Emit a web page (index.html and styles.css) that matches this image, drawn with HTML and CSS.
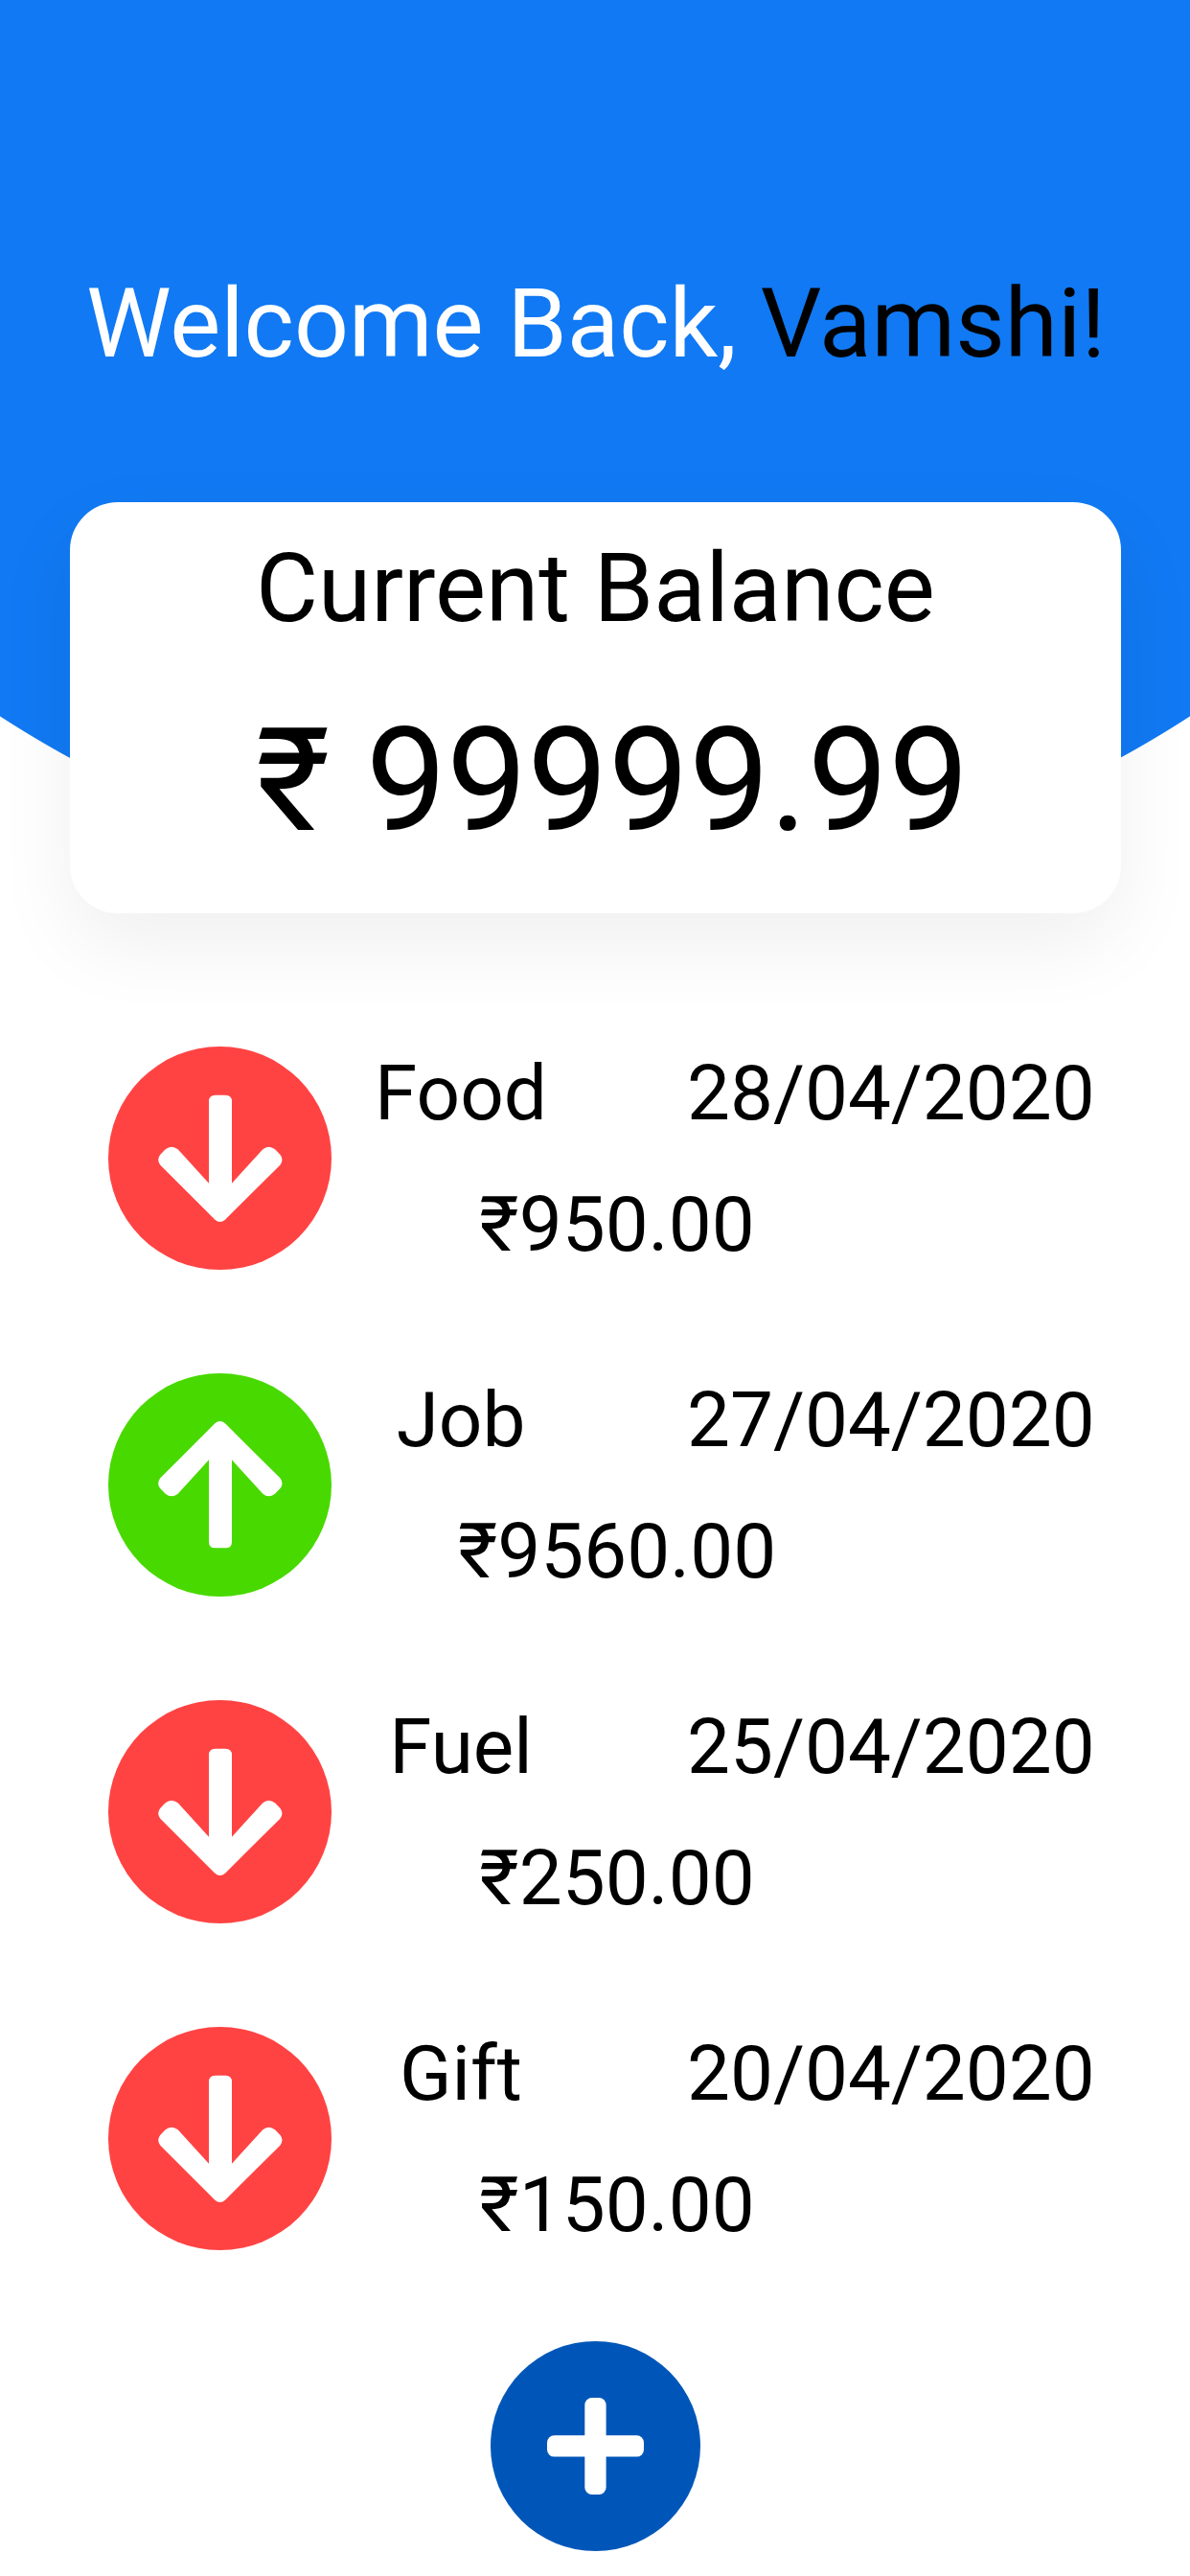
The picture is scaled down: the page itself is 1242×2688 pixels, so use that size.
FILE: index.html
```html
<!DOCTYPE html>
<html lang="en">
<head>
<meta charset="utf-8">
<title>Balance</title>
<link rel="stylesheet" href="styles.css">
</head>
<body>
<svg width="0" height="0" class="defs">
  <symbol id="arrow" viewBox="39 36 699 699">
    <path fill="#fff" d="M354 464L257 358Q237 343 218 358L202 374Q189 390 202 407L373 578Q389 592 405 578L577 407Q590 390 577 374L561 358Q541 343 523 358L426 464V208Q426 188 406 188H374Q354 188 354 208Z"/>
  </symbol>
</svg>
<main class="screen">
  <h1 class="greeting">Welcome Back, <span class="name">Vamshi!</span></h1>
  <section class="card">
    <h2 class="card-title">Current Balance</h2>
    <p class="balance">₹ 99999.99</p>
  </section>
  <ul class="list">
    <li class="row">
      <svg class="icon out"><use href="#arrow"/></svg>
      <span class="label">Food</span><span class="date">28/04/2020</span>
      <span class="amount">₹950.00</span>
    </li>
    <li class="row">
      <svg class="icon in"><use href="#arrow"/></svg>
      <span class="label">Job</span><span class="date">27/04/2020</span>
      <span class="amount">₹9560.00</span>
    </li>
    <li class="row">
      <svg class="icon out"><use href="#arrow"/></svg>
      <span class="label">Fuel</span><span class="date">25/04/2020</span>
      <span class="amount">₹250.00</span>
    </li>
    <li class="row">
      <svg class="icon out"><use href="#arrow"/></svg>
      <span class="label">Gift</span><span class="date">20/04/2020</span>
      <span class="amount">₹150.00</span>
    </li>
  </ul>
  <button class="add" aria-label="Add">
    <svg width="101" height="101" viewBox="0 0 101 101" fill="#fff">
      <rect x="0" y="39.3" width="101" height="22.3" rx="7.5"/>
      <rect x="39.3" y="0" width="22.3" height="101" rx="7.5"/>
    </svg>
  </button>
</main>
</body>
</html>
```
FILE: styles.css
```css
* {
  box-sizing: border-box;
  margin: 0;
  padding: 0;
}

body {
  background: #fff;
  color: #000;
  font-family: Roboto, sans-serif;
}

.defs {
  display: none;
}

.screen {
  display: flex;
  flex-direction: column;
  width: 1242px;
  height: 2688px;
  overflow: hidden;
  background: radial-gradient(circle at 621px -211px, #1179f3 1141.5px, #fff 1142.5px);
}

.greeting {
  margin: 279px 0 0 90px;
  font-size: 100px;
  font-weight: 400;
  line-height: 117px;
  color: #fff;
  white-space: nowrap;
}

.name {
  color: #000;
}

.card {
  width: 1097px;
  height: 429px;
  margin: 128px 0 0 73px;
  padding: 31px 0 0 194px;
  border-radius: 50px;
  background: #fff;
  box-shadow: 0 33px 84px rgba(0, 0, 0, 0.063);
}

.card-title {
  font-size: 100px;
  font-weight: 400;
  line-height: 117px;
}

.balance {
  margin-top: 55px;
  font-size: 150px;
  line-height: 176px;
}

.list {
  display: flex;
  flex-direction: column;
  gap: 108px;
  margin: 139px 0 0 113px;
  list-style: none;
}

.row {
  display: grid;
  grid-template-columns: 233px 270px 101px 225px 202px;
  grid-template-rows: 94px 94px;
  row-gap: 43px;
  height: 233px;
  padding-top: 2px;
  font-size: 80px;
  line-height: 94px;
  white-space: nowrap;
}

.icon {
  grid-row: 1 / 3;
  width: 233px;
  height: 233px;
  margin-top: -2px;
  border-radius: 50%;
}

.out {
  background: #ff4343;
}

.in {
  background: #48d900;
  transform: scaleY(-1);
}

.label {
  grid-column: 2;
  text-align: center;
}

.date {
  grid-column: 4 / 6;
}

.amount {
  grid-column: 2 / 5;
  grid-row: 2;
  text-align: center;
}

.add {
  display: flex;
  align-items: center;
  justify-content: center;
  width: 219px;
  height: 219px;
  margin: 95px 0 0 512px;
  border: 0;
  border-radius: 50%;
  background: #0056b8;
}
```
